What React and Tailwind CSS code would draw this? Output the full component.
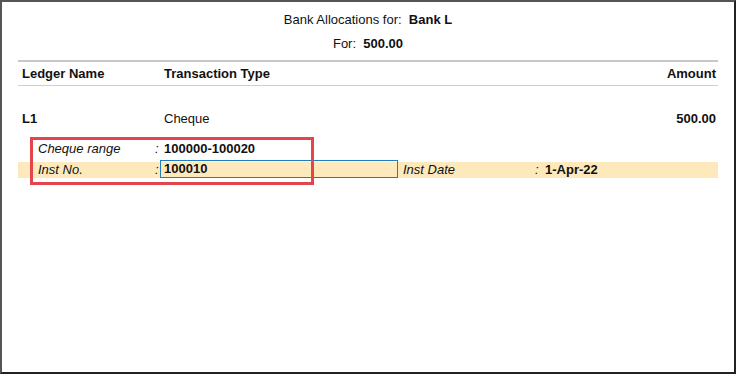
// Bank allocation detail screen
const App = () => {
  return (
    <div className="w-[737px] h-[375px] bg-white font-['Liberation_Sans',Arial,sans-serif] text-[#111] text-[13px]">
      <div className="relative w-[736px] h-[374px] border-2 border-l-[#555] border-t-[#555] border-r-[#222] border-b-[#222] px-[16px]">
        {/* Heading */}
        <div className="pt-[10px] h-[26px] leading-[16px] text-center">
          Bank Allocations for:&nbsp; <span className="font-bold">Bank L</span>
        </div>
        <div className="mt-[8px] h-[16px] leading-[16px] text-center">
          For:&nbsp; <span className="font-bold">500.00</span>
        </div>

        {/* Column header */}
        <div className="mt-[8px] border-t-2 border-[#c8c8c8]" />
        <div className="flex h-[24px] items-center pl-[4px] pr-[2px] font-bold border-b border-[#cfcfcf]">
          <div className="w-[142px]">Ledger Name</div>
          <div className="flex-1">Transaction Type</div>
          <div>Amount</div>
        </div>

        {/* Ledger row */}
        <div className="mt-[25px] flex h-[16px] items-center pl-[4px] pr-[2px]">
          <div className="w-[142px] font-bold">L1</div>
          <div className="flex-1">Cheque</div>
          <div className="font-bold">500.00</div>
        </div>

        <div className="mt-[14px] flex h-[16px] items-center">
          <div className="w-[137px] pl-[20px] italic">Cheque range</div>
          <div className="w-[9px] italic">:</div>
          <div className="font-bold">100000-100020</div>
        </div>

        <div className="mt-[5px] flex h-[16px] items-center bg-[#fde9bc]">
          <div className="w-[137px] pl-[20px] italic">Inst No.</div>
          <div className="w-[5px] italic">:</div>
          <div className="w-[238px] h-[18px] -mt-[2px] border border-[#1a7fc4] px-[3px] leading-[16px] font-bold">
            100010
          </div>
          <div className="w-[137px] pl-[5px] italic">Inst Date</div>
          <div className="w-[10px] italic">:</div>
          <div className="font-bold">1-Apr-22</div>
        </div>

        {/* Annotation highlight */}
        <div className="absolute left-[28px] top-[135px] w-[284px] h-[48px] border-[3px] border-[#e2464a]" />
      </div>
    </div>
  );
};

export default App;
